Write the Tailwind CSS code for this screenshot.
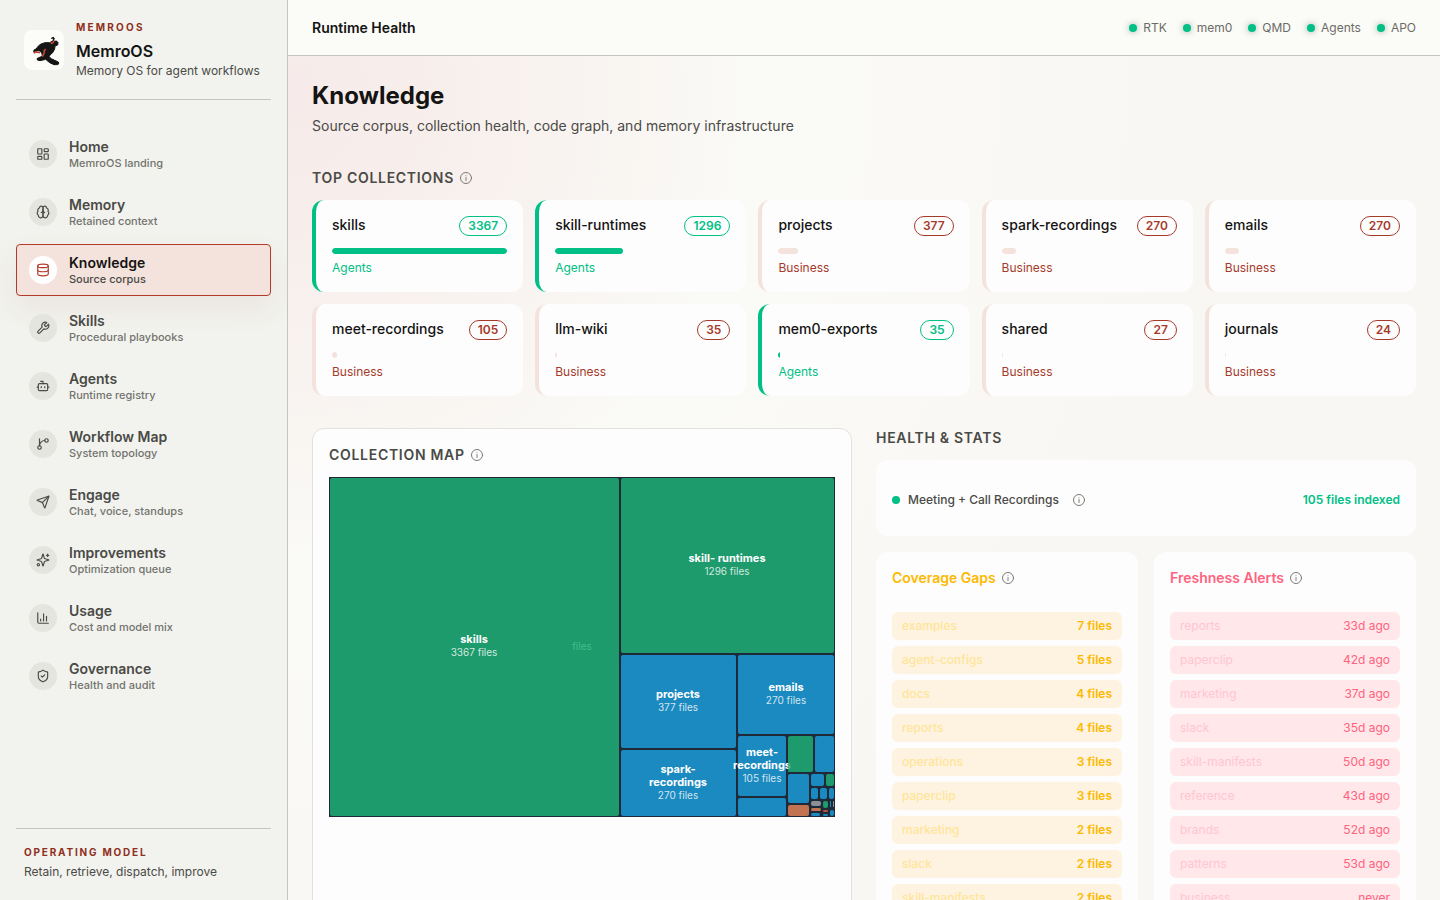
<!DOCTYPE html>
<html lang="en">
<head>
<meta charset="utf-8">
<meta name="viewport" content="width=device-width, initial-scale=1">
<title>MemroOS – Knowledge</title>
<script src="https://cdn.jsdelivr.net/npm/@tailwindcss/browser@4"></script>
</head>
<body class="flex h-screen overflow-hidden bg-[#fafaf6] font-['Inter','Liberation_Sans',sans-serif] text-sm text-[#141413] antialiased">

<svg class="hidden" aria-hidden="true">
  <symbol id="info" viewBox="0 0 24 24" fill="none" stroke="currentColor" stroke-width="2" stroke-linecap="round"><circle cx="12" cy="12" r="11"/><path d="M12 17v-6M12 7.500v.1"/></symbol>
</svg>

<aside class="flex w-72 shrink-0 flex-col border-r border-[#c6c6c1] bg-[#f2f3ee] px-4">
  <div class="flex h-25 shrink-0 items-center gap-3 border-b border-[#c6c6c1] pl-2">
    <svg class="size-10 shrink-0 rounded-lg bg-[#fcfcf8]" viewBox="6 6 120 120" role="img" aria-label="MemroOS logo">
      <path fill="#151515" stroke="#151515" stroke-width="3" stroke-linejoin="round" d="M88 31l4-2 4 11 8-1 4 5-1 7-8 3-1 9-6 11-8 7-3 5 7 6 10 5 11 5 1 6-6 2-8 0-13-6-12-10-8 2-9 2-8-2-1-4 5-3 6-2 5-5-2-7-5-6-5-1-10 2-4 1 1-5 6-3 8-10 7-5 12-4 14 0 9-5 5-6-2-5z"/>
      <path fill="none" stroke="#c24632" stroke-width="5" stroke-linejoin="round" d="M35 75l7-3 12 2M71 63l-4 5-1 8-5 10M86 46l7-2 3-5"/>
    </svg>
    <div class="pb-0.5">
      <p class="text-[10px] leading-4 font-bold tracking-[0.22em] text-[#8f2f20]">MEMROOS</p>
      <p class="mt-1 text-base leading-6 font-semibold">MemroOS</p>
      <p class="text-xs leading-4 whitespace-nowrap text-[#4a4a46]">Memory OS for agent workflows</p>
    </div>
  </div>
  <nav id="nav" class="mt-7 flex flex-1 flex-col gap-1.5" aria-label="Main"></nav>
  <div class="border-t border-[#c6c6c1] px-2 pt-[15px] pb-5">
    <p class="text-[10px] leading-4 font-bold tracking-[0.18em] text-[#8f2f20]">OPERATING MODEL</p>
    <p class="mt-1 text-xs leading-4 text-[#4a4a46]">Retain, retrieve, dispatch, improve</p>
  </div>
</aside>

<div class="flex min-w-0 flex-1 flex-col">
  <header class="flex h-14 shrink-0 items-center justify-between border-b border-[#c6c6c1] bg-[#fbfbf7] px-6">
    <h2 class="font-semibold">Runtime Health</h2>
    <ul id="status" class="flex gap-4 text-xs text-[#6b6b66]"></ul>
  </header>

  <main class="min-h-0 flex-1 overflow-hidden bg-[radial-gradient(circle_at_0px_40px,#f6ebea_0px,#f7edeb_100px,#fafaf6_470px,#f9f7f3_900px)] px-6 pt-6">
    <h1 class="text-2xl leading-8 font-bold">Knowledge</h1>
    <p class="mt-1 text-sm leading-5 text-[#4a4a46]">Source corpus, collection health, code graph, and memory infrastructure</p>

    <section class="mt-8">
      <h3 class="flex items-center gap-1.5 text-sm leading-5 font-semibold tracking-wider text-[#4a4a46]">TOP COLLECTIONS
        <svg class="size-3 text-[#7a7a75]"><use href="#info"/></svg></h3>
      <div id="collections" class="mt-3 grid grid-cols-5 gap-3"></div>
    </section>

    <div class="mt-8 grid grid-cols-2 gap-6">
      <section class="min-h-[600px] rounded-xl border border-[#e2e2dd] bg-[#fdfdfd] p-4">
        <h3 class="flex items-center gap-1.5 text-sm leading-5 font-semibold tracking-wider text-[#4a4a46]">COLLECTION MAP
          <svg class="size-3 text-[#7a7a75]"><use href="#info"/></svg></h3>
        <svg class="mt-3 w-full" viewBox="329 477 506 340" role="img" aria-label="Treemap of collections by file count">
          <rect x="329" y="477" width="506" height="340" fill="#1f2937"/>
          <g id="tiles"></g>
          <g id="labels" text-anchor="middle" fill="#ffffff"></g>
          <text x="582" y="650" text-anchor="middle" class="text-[10px]" fill="#5fd6a4" fill-opacity="0.6">files</text>
          <rect x="788" y="760" width="7" height="12" fill="#1d9b6c" fill-opacity="0.7"/>
        </svg>
      </section>

      <section>
        <h3 class="text-sm leading-5 font-semibold tracking-wider text-[#4a4a46]">HEALTH &amp; STATS</h3>
        <div class="mt-3 flex h-19 items-center rounded-xl bg-[#fdfdfd] px-4 pt-1 text-xs">
          <span class="size-2 rounded-full bg-[#00c085]"></span>
          <span class="ml-2 font-medium text-[#4a4a46]">Meeting + Call Recordings</span>
          <svg class="ml-3.5 size-3 text-[#7a7a75]"><use href="#info"/></svg>
          <span class="ml-auto font-semibold text-[#00c085]">105 files indexed</span>
        </div>
        <div class="mt-4 grid grid-cols-2 gap-4">
          <div class="rounded-xl bg-[#fdfdfd] p-4">
            <h4 class="flex items-center gap-1.5 text-sm leading-5 font-semibold text-[#fdb900]">Coverage Gaps
              <svg class="size-3 text-[#7a7a75]"><use href="#info"/></svg></h4>
            <ul id="gaps" class="mt-6 flex flex-col gap-1.5 text-xs"></ul>
          </div>
          <div class="rounded-xl bg-[#fdfdfd] p-4">
            <h4 class="flex items-center gap-1.5 text-sm leading-5 font-semibold text-[#ff637e]">Freshness Alerts
              <svg class="size-3 text-[#7a7a75]"><use href="#info"/></svg></h4>
            <ul id="alerts" class="mt-6 flex flex-col gap-1.5 text-xs"></ul>
          </div>
        </div>
      </section>
    </div>
  </main>
</div>

<script>
const fill = (id, items, view) => { document.getElementById(id).innerHTML = items.map(view).join(''); };

const nav = [
  ['Home', 'MemroOS landing', '<rect width="7" height="9" x="3" y="3" rx="1"/><rect width="7" height="5" x="14" y="3" rx="1"/><rect width="7" height="9" x="14" y="12" rx="1"/><rect width="7" height="5" x="3" y="16" rx="1"/>'],
  ['Memory', 'Retained context', '<path d="M12 5a3 3 0 1 0-5.997.125 4 4 0 0 0-2.526 5.770 4 4 0 0 0 .556 6.588A4 4 0 1 0 12 18Z"/><path d="M12 5a3 3 0 1 1 5.997.125 4 4 0 0 1 2.526 5.770 4 4 0 0 1-.556 6.588A4 4 0 1 1 12 18Z"/><path d="M15 13a4.500 4.500 0 0 1-3-4 4.500 4.500 0 0 1-3 4"/>'],
  ['Knowledge', 'Source corpus', '<ellipse cx="12" cy="5" rx="9" ry="3"/><path d="M3 5v14a9 3 0 0 0 18 0V5"/><path d="M3 12a9 3 0 0 0 18 0"/>'],
  ['Skills', 'Procedural playbooks', '<path d="M14.700 6.300a1 1 0 0 0 0 1.400l1.600 1.600a1 1 0 0 0 1.400 0l3.770-3.770a6 6 0 0 1-7.940 7.940l-6.910 6.910a2.120 2.120 0 0 1-3-3l6.910-6.910a6 6 0 0 1 7.940-7.940l-3.760 3.760z"/>'],
  ['Agents', 'Runtime registry', '<path d="M12 8V4H8"/><rect width="16" height="12" x="4" y="8" rx="2"/><path d="M2 14h2M20 14h2M15 13v2M9 13v2"/>'],
  ['Workflow Map', 'System topology', '<path d="M6 3v12"/><circle cx="18" cy="6" r="3"/><circle cx="6" cy="18" r="3"/><path d="M15 6a9 9 0 0 0-9 9"/>'],
  ['Engage', 'Chat, voice, standups', '<path d="M14.536 21.686a.5.5 0 0 0 .937-.024l6.500-19a.496.496 0 0 0-.635-.635l-19 6.500a.5.5 0 0 0-.024.937l7.930 3.180a2 2 0 0 1 1.112 1.110z"/><path d="m21.854 2.147-10.940 10.939"/>'],
  ['Improvements', 'Optimization queue', '<path d="M9.937 15.500A2 2 0 0 0 8.500 14.063l-6.135-1.582a.5.5 0 0 1 0-.962L8.500 9.936A2 2 0 0 0 9.937 8.500l1.582-6.135a.5.5 0 0 1 .963 0L14.063 8.500A2 2 0 0 0 15.500 9.937l6.135 1.581a.5.5 0 0 1 0 .964L15.500 14.063a2 2 0 0 0-1.437 1.437l-1.582 6.135a.5.5 0 0 1-.963 0z"/><path d="M20 2v4M22 4h-4"/><circle cx="4" cy="20" r="2"/>'],
  ['Usage', 'Cost and model mix', '<path d="M3 3v16a2 2 0 0 0 2 2h16M8 17v-3M13 17V5M18 17V9"/>'],
  ['Governance', 'Health and audit', '<path d="M20 13c0 5-3.500 7.500-7.660 8.950a1 1 0 0 1-.67-.01C7.500 20.500 4 18 4 13V6a1 1 0 0 1 1-1c2 0 4.500-1.200 6.240-2.720a1.170 1.170 0 0 1 1.520 0C14.510 3.810 17 5 19 5a1 1 0 0 1 1 1z"/><path d="m9 12 2 2 4-4"/>'],
];
fill('nav', nav, ([title, sub, icon]) => {
  const on = title === 'Knowledge';
  return `<a href="#" ${on ? 'aria-current="page"' : ''} class="flex h-13 items-center gap-3 rounded border px-3 ${on ? 'border-[#b33a2a] bg-[#f4e3dc] shadow-[0_12px_30px_rgba(143,47,32,0.08)]' : 'border-transparent'}">
    <span class="flex size-7 items-center justify-center rounded-full ${on ? 'bg-white text-[#b33a2a]' : 'bg-[#e4e5df] text-[#4a4a46]'}"><svg class="size-3.5" viewBox="0 0 24 24" fill="none" stroke="currentColor" stroke-width="2" stroke-linecap="round" stroke-linejoin="round">${icon}</svg></span>
    <span><span class="block text-sm leading-[18px] font-semibold ${on ? 'text-[#141413]' : 'text-[#4a4a46]'}">${title}</span><span class="block text-[11px] leading-[14px] font-medium ${on ? 'text-[#4a4a46]' : 'text-[#73736e]'}">${sub}</span></span></a>`;
});

fill('status', ['RTK', 'mem0', 'QMD', 'Agents', 'APO'], s =>
  `<li class="flex items-center gap-1.5"><span class="size-2 rounded-full bg-[#00c085] shadow-[0_0_6px_rgba(60,100,90,0.5)]"></span>${s}</li>`);

fill('collections', [
  ['skills', 3367, 'Agents'], ['skill-runtimes', 1296, 'Agents'], ['projects', 377, 'Business'],
  ['spark-recordings', 270, 'Business'], ['emails', 270, 'Business'], ['meet-recordings', 105, 'Business'],
  ['llm-wiki', 35, 'Business'], ['mem0-exports', 35, 'Agents'], ['shared', 27, 'Business'], ['journals', 24, 'Business'],
], ([name, count, kind]) => {
  const a = kind === 'Agents';
  return `<article class="rounded-xl border-l-4 bg-[#fdfdfd] p-4 ${a ? 'border-[#00c085]' : 'border-[#f4e3dc]'}">
    <div class="flex h-5 items-start justify-between"><span class="text-sm leading-[18px] font-medium">${name}</span><span class="flex h-5 items-center rounded-full border px-2 text-xs font-semibold ${a ? 'border-[#00c085] text-[#00c085]' : 'border-[#a63a2a] text-[#a63a2a]'}">${count}</span></div>
    <div class="mt-3 h-1.5 overflow-hidden rounded-full"><div class="h-full rounded-full ${a ? 'bg-[#00c085]' : 'bg-[#f4e3dc]'}" style="width:${count / 3367 * 100}%"></div></div>
    <p class="mt-1.5 text-xs leading-4 ${a ? 'text-[#00c085]' : 'text-[#a63a2a]'}">${kind}</p></article>`;
});

const G = '#1d9b6c', B = '#1b8ac0', O = '#c17352', N = '#8b8f96', R = '#b8503c';
fill('tiles', [
  [330,478,289,338,G], [621,478,213,175,G], [621,655,115,93,B], [738,655,96,79,B], [621,750,115,66,B],
  [738,736,48,60,B], [738,798,48,18,B], [788,736,25,36,G], [815,736,19,36,B], [788,774,21,29,B],
  [788,805,21,11,O], [811,774,13,12,B], [826,774,8,12,G], [811,788,7,11,B], [820,788,7,11,B],
  [829,788,5,11,B], [811,801,10,5,N], [811,808,10,3,O], [811,813,9,3,B], [823,801,5,7,G],
  [823,810,5,2,R], [823,814,5,2,B], [830,801,1,6,B], [833,801,1,6,N], [830,810,4,6,B],
], ([x, y, w, h, c]) => `<rect x="${x}" y="${y}" width="${w}" height="${h}" rx="${Math.min(2, w / 2, h / 2)}" fill="${c}"/>`);
fill('labels', [
  [474, 643, ['skills'], 3367], [727, 562, ['skill- runtimes'], 1296], [678, 698, ['projects'], 377],
  [786, 691, ['emails'], 270], [678, 773, ['spark-', 'recordings'], 270], [762, 756, ['meet-', 'recordings'], 105],
], ([x, y, lines, n]) => lines.map((t, i) => `<text x="${x}" y="${y + i * 13}" class="text-[11px] font-bold">${t}</text>`).join('') +
  `<text x="${x}" y="${y + lines.length * 13}" class="text-[10px]" fill-opacity="0.8">${n} files</text>`);

fill('gaps', [['examples', 7], ['agent-configs', 5], ['docs', 4], ['reports', 4], ['operations', 3], ['paperclip', 3], ['marketing', 2], ['slack', 2], ['skill-manifests', 2]],
  ([n, c]) => `<li class="flex h-7 items-center justify-between rounded-md bg-[#fef3e0] px-2.5"><span class="font-medium text-[#fee59a]">${n}</span><span class="font-semibold text-[#fdb900]">${c} files</span></li>`);
fill('alerts', [['reports', '33d ago'], ['paperclip', '42d ago'], ['marketing', '37d ago'], ['slack', '35d ago'], ['skill-manifests', '50d ago'], ['reference', '43d ago'], ['brands', '52d ago'], ['patterns', '53d ago'], ['business', 'never']],
  ([n, d]) => `<li class="flex h-7 items-center justify-between rounded-md bg-[#ffe7ea] px-2.5"><span class="text-[#ffc6ce]">${n}</span><span class="text-[#ff637e]">${d}</span></li>`);
</script>
</body>
</html>
